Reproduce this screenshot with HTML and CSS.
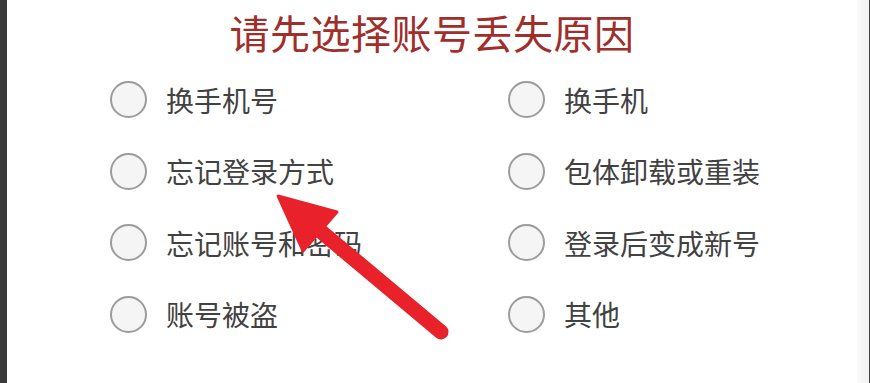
FILE: index.html
```html
<!DOCTYPE html>
<html lang="zh-CN">
<head>
    <meta charset="UTF-8">
    <meta name="viewport" content="width=device-width, initial-scale=1.0">
    <title>账号丢失原因</title>
    <link rel="stylesheet" href="styles.css">
</head>
<body>
    <div class="screen">
        <div class="edge-left"></div>
        <div class="panel">
            <h1 class="title">请先选择账号丢失原因</h1>
            <div class="reasons">
                <label class="reason"><span class="radio"></span>换手机号</label>
                <label class="reason"><span class="radio"></span>换手机</label>
                <label class="reason"><span class="radio"></span>忘记登录方式</label>
                <label class="reason"><span class="radio"></span>包体卸载或重装</label>
                <label class="reason"><span class="radio"></span>忘记账号和密码</label>
                <label class="reason"><span class="radio"></span>登录后变成新号</label>
                <label class="reason"><span class="radio"></span>账号被盗</label>
                <label class="reason"><span class="radio"></span>其他</label>
            </div>
        </div>
        <div class="edge-right"></div>
        <svg class="arrow" width="870" height="383" viewBox="0 0 870 383">
            <line x1="312" y1="224" x2="441" y2="332" stroke="#e8212b" stroke-width="15" stroke-linecap="round"/>
            <polygon points="278,196 337,212 303,251" fill="#e8212b" stroke="#e8212b" stroke-width="3" stroke-linejoin="round"/>
        </svg>
    </div>
</body>
</html>
```

FILE: styles.css
```css
*{margin:0;padding:0;box-sizing:border-box;}
body{width:870px;height:383px;overflow:hidden;background:#fff;font-family:"Noto Sans CJK SC","Noto Sans",sans-serif;}
.screen{position:relative;display:flex;width:870px;height:383px;}
.edge-left{width:7px;background:#3b3a3a;}
.panel{flex:1;background:#fff;padding-top:8px;}
.edge-right{width:13px;background:linear-gradient(to right,#fafafa,#f2f2f2);border-right:1px solid #444;}
.title{font-size:40px;line-height:48px;font-weight:400;color:#a02e2b;text-align:center;letter-spacing:0.5px;}
.reasons{display:grid;grid-template-columns:398px 1fr;grid-auto-rows:71.5px;margin-top:8px;padding-left:103px;}
.reason{display:flex;align-items:center;gap:19px;font-size:28px;color:#424242;}
.radio{width:37px;height:37px;border:2.5px solid #9c9c9c;border-radius:50%;background:#f5f5f5;flex-shrink:0;}
.arrow{position:absolute;left:0;top:0;pointer-events:none;}
```
